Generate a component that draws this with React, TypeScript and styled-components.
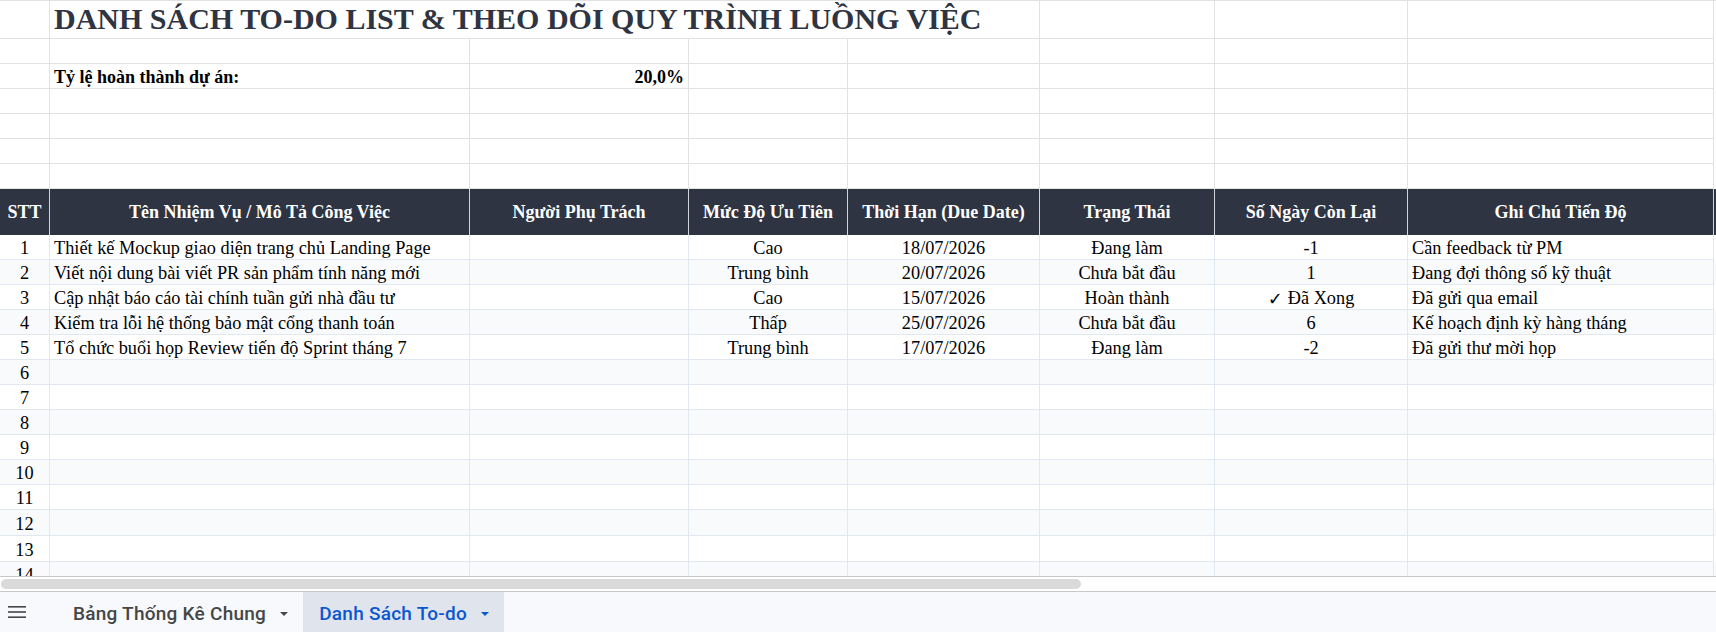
import styled, { createGlobalStyle } from 'styled-components'

const GlobalStyle = createGlobalStyle`
  html, body {
    margin: 0;
    padding: 0;
    background: #fff;
  }
  * {
    box-sizing: border-box;
  }
`

const COLUMNS = '50px 420px 219px 159px 192px 175px 193px 306px'

const Page = styled.div`
  width: 1716px;
  height: 632px;
  display: flex;
  flex-direction: column;
  overflow: hidden;
  font-family: 'Liberation Serif', 'Times New Roman', serif;
  color: #000;
`

const Sheet = styled.div`
  height: 576px;
  overflow: hidden;
  border-top: 1px solid #e2e2e2;
`

const Row = styled.div<{ $h: number; $stripe?: boolean; $line?: string }>`
  display: grid;
  grid-template-columns: ${COLUMNS};
  height: ${(p) => p.$h}px;
  background: ${(p) => (p.$stripe ? '#f8fafc' : '#fff')};

  & > * {
    border-right: 1px solid ${(p) => p.$line || '#e2e2e2'};
    border-bottom: 1px solid ${(p) => p.$line || '#e2e2e2'};
  }
`

const Cell = styled.div<{ $align?: 'left' | 'center' | 'right'; $bold?: boolean; $span?: number }>`
  display: flex;
  align-items: flex-end;
  justify-content: ${(p) =>
    p.$align === 'center' ? 'center' : p.$align === 'right' ? 'flex-end' : 'flex-start'};
  grid-column: ${(p) => (p.$span ? `span ${p.$span}` : 'auto')};
  padding: 0 4px 0 4px;
  font-size: ${(p) => (p.$bold ? 18 : 18.3)}px;
  font-weight: ${(p) => (p.$bold ? 700 : 400)};
  white-space: nowrap;
  overflow: hidden;
`

const Check = styled.span`
  font-family: 'DejaVu Sans', sans-serif;
  font-weight: 700;
  font-size: 18px;
  margin-right: 5px;
`

const Title = styled.span`
  font-size: 30px;
  font-weight: 700;
  color: #2e3442;
  line-height: 1;
  padding-bottom: 4px;
`

const HeadRow = styled.div`
  display: grid;
  grid-template-columns: ${COLUMNS};
  height: 46px;
  background: #2e3442;
`

const HeadCell = styled.div`
  display: flex;
  align-items: center;
  justify-content: center;
  border-right: 1px solid #cfd3da;
  color: #fff;
  font-size: 18px;
  font-weight: 700;
  white-space: nowrap;
  overflow: hidden;
`

const ScrollTrack = styled.div`
  height: 16px;
  border-top: 1px solid #c7c7c7;
  border-bottom: 1px solid #c7c7c7;
  padding: 2px 0 2px 1px;
  background: #fff;
`

const ScrollThumb = styled.div`
  width: 1080px;
  height: 100%;
  background: #dadada;
  border-radius: 6px;
`

const TabBar = styled.div`
  height: 40px;
  display: flex;
  align-items: stretch;
  background: #f8f9fc;
  font-family: Roboto, 'Noto Sans', sans-serif;
`

const MenuButton = styled.div`
  width: 57px;
  display: flex;
  align-items: center;
  padding-left: 8px;
  color: #444746;
`

const Tab = styled.div<{ $active?: boolean }>`
  display: flex;
  align-items: center;
  gap: 14px;
  padding: 3px 15px 0 16px;
  font-size: 19px;
  font-weight: 500;
  letter-spacing: 0.25px;
  color: ${(p) => (p.$active ? '#0b57d0' : '#444746')};
  background: ${(p) => (p.$active ? '#e0e5ed' : 'transparent')};
`

const Caret = styled.span`
  width: 0;
  height: 0;
  border-left: 4px solid transparent;
  border-right: 4px solid transparent;
  border-top: 4px solid currentColor;
  margin-top: 1px;
`

type Task = {
  task: string
  owner: string
  priority: string
  due: string
  status: string
  days: string
  done?: boolean
  note: string
}

const tasks: Task[] = [
  {
    task: 'Thiết kế Mockup giao diện trang chủ Landing Page',
    owner: '',
    priority: 'Cao',
    due: '18/07/2026',
    status: 'Đang làm',
    days: '-1',
    note: 'Cần feedback từ PM',
  },
  {
    task: 'Viết nội dung bài viết PR sản phẩm tính năng mới',
    owner: '',
    priority: 'Trung bình',
    due: '20/07/2026',
    status: 'Chưa bắt đầu',
    days: '1',
    note: 'Đang đợi thông số kỹ thuật',
  },
  {
    task: 'Cập nhật báo cáo tài chính tuần gửi nhà đầu tư',
    owner: '',
    priority: 'Cao',
    due: '15/07/2026',
    status: 'Hoàn thành',
    days: 'Đã Xong',
    done: true,
    note: 'Đã gửi qua email',
  },
  {
    task: 'Kiểm tra lỗi hệ thống bảo mật cổng thanh toán',
    owner: '',
    priority: 'Thấp',
    due: '25/07/2026',
    status: 'Chưa bắt đầu',
    days: '6',
    note: 'Kế hoạch định kỳ hàng tháng',
  },
  {
    task: 'Tổ chức buổi họp Review tiến độ Sprint tháng 7',
    owner: '',
    priority: 'Trung bình',
    due: '17/07/2026',
    status: 'Đang làm',
    days: '-2',
    note: 'Đã gửi thư mời họp',
  },
]

const headers = [
  'STT',
  'Tên Nhiệm Vụ / Mô Tả Công Việc',
  'Người Phụ Trách',
  'Mức Độ Ưu Tiên',
  'Thời Hạn (Due Date)',
  'Trạng Thái',
  'Số Ngày Còn Lại',
  'Ghi Chú Tiến Độ',
]

const TOTAL_ROWS = 14

const EmptyCells = ({ count }: { count: number }) => (
  <>
    {Array.from({ length: count }).map((_, i) => (
      <Cell key={i} />
    ))}
  </>
)

const MenuIcon = () => (
  <svg width="18" height="12" viewBox="0 0 18 12">
    <rect x="0" y="0" width="18" height="1.6" fill="currentColor" />
    <rect x="0" y="5.2" width="18" height="1.6" fill="currentColor" />
    <rect x="0" y="10.4" width="18" height="1.6" fill="currentColor" />
  </svg>
)

export default function App() {
  return (
    <Page>
      <GlobalStyle />
      <Sheet>
        <Row $h={38}>
          <Cell />
          <Cell $span={4}>
            <Title>DANH SÁCH TO-DO LIST &amp; THEO DÕI QUY TRÌNH LUỒNG VIỆC</Title>
          </Cell>
          <EmptyCells count={3} />
        </Row>
        <Row $h={25}>
          <EmptyCells count={8} />
        </Row>
        <Row $h={25}>
          <Cell />
          <Cell $bold>Tỷ lệ hoàn thành dự án:</Cell>
          <Cell $bold $align="right">
            20,0%
          </Cell>
          <EmptyCells count={5} />
        </Row>
        {[0, 1, 2, 3].map((i) => (
          <Row key={i} $h={25}>
            <EmptyCells count={8} />
          </Row>
        ))}

        <HeadRow>
          {headers.map((h) => (
            <HeadCell key={h}>{h}</HeadCell>
          ))}
        </HeadRow>

        {Array.from({ length: TOTAL_ROWS }).map((_, i) => {
          const t = tasks[i]
          return (
            <Row key={i} $h={i === 11 || i === 12 ? 26 : 25} $stripe={i % 2 === 1} $line="#e2e8f0">
              <Cell $align="center">{i + 1}</Cell>
              <Cell>{t?.task}</Cell>
              <Cell>{t?.owner}</Cell>
              <Cell $align="center">{t?.priority}</Cell>
              <Cell $align="center">{t?.due}</Cell>
              <Cell $align="center">{t?.status}</Cell>
              <Cell $align="center">
                {t?.done && <Check>✓</Check>}
                {t?.days}
              </Cell>
              <Cell>{t?.note}</Cell>
            </Row>
          )
        })}
      </Sheet>

      <ScrollTrack>
        <ScrollThumb />
      </ScrollTrack>

      <TabBar>
        <MenuButton>
          <MenuIcon />
        </MenuButton>
        <Tab>
          Bảng Thống Kê Chung
          <Caret />
        </Tab>
        <Tab $active>
          Danh Sách To-do
          <Caret />
        </Tab>
      </TabBar>
    </Page>
  )
}
